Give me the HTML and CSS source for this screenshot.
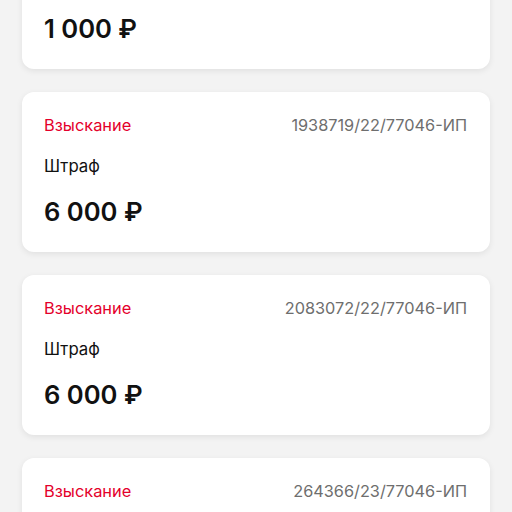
FILE: index.html
```html
<!DOCTYPE html>
<html lang="ru">
<head>
<meta charset="utf-8">
<link rel="stylesheet" href="styles.css">
</head>
<body>
<div class="list">
  <div class="card card-tail">
    <div class="amount">1 000 ₽</div>
  </div>
  <div class="card">
    <div class="row"><span class="tag">Взыскание</span><span class="num">1938719/22/77046-ИП</span></div>
    <div class="title">Штраф</div>
    <div class="amount">6 000 ₽</div>
  </div>
  <div class="card">
    <div class="row"><span class="tag">Взыскание</span><span class="num">2083072/22/77046-ИП</span></div>
    <div class="title">Штраф</div>
    <div class="amount">6 000 ₽</div>
  </div>
  <div class="card">
    <div class="row"><span class="tag">Взыскание</span><span class="num">264366/23/77046-ИП</span></div>
  </div>
</div>
</body>
</html>
```
FILE: styles.css
```css
html, body {
  margin: 0;
  padding: 0;
  background: #f3f3f3;
  font-family: "Inter", "Noto Sans", sans-serif;
  overflow: hidden;
  height: 512px;
}
.list {
  display: flex;
  flex-direction: column;
  gap: 23px;
  padding: 0 22px;
  margin-top: -91px;
}
.card {
  background: #fff;
  border-radius: 12px;
  box-shadow: 0 2px 6px rgba(0,0,0,0.08);
  padding: 23px 23px 24px 22px;
  height: 160px;
  box-sizing: border-box;
  display: flex;
  flex-direction: column;
}
.card-tail {
  justify-content: flex-end;
}
.row {
  display: flex;
  justify-content: space-between;
  align-items: center;
  height: 20px;
  line-height: 20px;
}
.tag {
  color: #e4002b;
  font-size: 16.4px;
}
.num {
  color: #6e6e6e;
  font-size: 16.3px;
}
.title {
  margin-top: 21px;
  font-size: 16.8px;
  line-height: 20px;
  color: #111;
}
.amount {
  margin-top: 20px;
  font-size: 25.6px;
  line-height: 32px;
  font-weight: 600;
  color: #111;
}
```
